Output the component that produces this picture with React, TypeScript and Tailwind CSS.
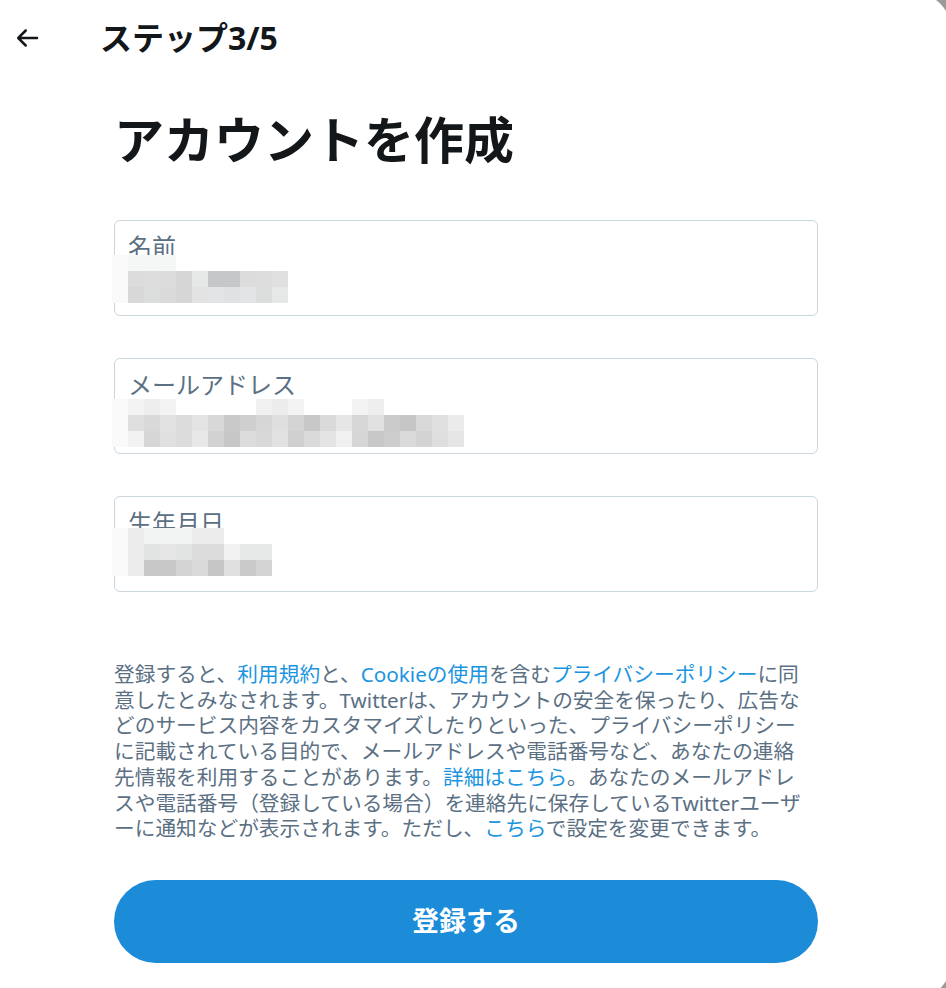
import React from 'react';

const FONT = "font-['Noto_Sans','Noto_Sans_CJK_JP',sans-serif]";

// pixelated (blurred) field values, 16px blocks
const nameBlocks = [
  ['bg-[#fafafa]', 'bg-[#f5f6f6]', 'bg-[#f5f6f6]', 'bg-[#f5f6f6]'],
  ['bg-[#fafafa]', 'bg-[#dcdcdc]', 'bg-[#dddddd]', 'bg-[#dcdcdc]', 'bg-[#d6d6d6]', 'bg-[#e6e7e7]', 'bg-[#c6c7c8]', 'bg-[#c6c7c8]', 'bg-[#dcdcdc]', 'bg-[#dddddd]', 'bg-[#e0e0e0]'],
  ['bg-[#fafafa]', 'bg-[#d8d8d8]', 'bg-[#dcdddd]', 'bg-[#dadada]', 'bg-[#d6d6d6]', 'bg-[#e3e3e3]', 'bg-[#e3e4e5]', 'bg-[#e0e1e2]', 'bg-[#e3e4e5]', 'bg-[#dcdddd]', 'bg-[#e6e7e7]'],
];

const emailBlocks = [
  ['bg-[#fafafa]', 'bg-[#f3f3f4]', 'bg-[#eeeeef]', 'bg-[#f3f3f4]', 'bg-white', 'bg-white', 'bg-white', 'bg-white', 'bg-white', 'bg-[#f0f0f1]', 'bg-[#ececed]', 'bg-[#f3f3f4]', 'bg-white', 'bg-white', 'bg-white', 'bg-[#f3f3f4]', 'bg-[#eeeeef]'],
  ['bg-[#fafafa]', 'bg-[#dedede]', 'bg-[#d9d9da]', 'bg-[#e2e2e3]', 'bg-[#dcdcdd]', 'bg-[#e4e4e5]', 'bg-[#d8d8d9]', 'bg-[#c9c9ca]', 'bg-[#cfcfd0]', 'bg-[#d6d6d7]', 'bg-[#dfdfe0]', 'bg-[#d4d4d5]', 'bg-[#c8c8c9]', 'bg-[#dadadb]', 'bg-[#e6e6e7]', 'bg-[#d7d7d8]', 'bg-[#e1e1e2]', 'bg-[#cbcbcc]', 'bg-[#c6c6c7]', 'bg-[#d9d9da]', 'bg-[#e0e0e1]', 'bg-[#ebebec]'],
  ['bg-[#fafafa]', 'bg-[#f2f2f2]', 'bg-[#d6d6d7]', 'bg-[#e0e0e1]', 'bg-[#dcdcdd]', 'bg-[#e8e8e9]', 'bg-[#d2d2d3]', 'bg-[#c7c7c8]', 'bg-[#dcdcdd]', 'bg-[#d8d8d9]', 'bg-[#e2e2e3]', 'bg-[#d0d0d1]', 'bg-[#dadadb]', 'bg-[#e4e4e5]', 'bg-[#f0f0f1]', 'bg-[#d6d6d7]', 'bg-[#c8c8c9]', 'bg-[#cdcdce]', 'bg-[#dadadb]', 'bg-[#d3d3d4]', 'bg-[#dedede]', 'bg-[#e6e6e7]'],
];

const birthBlocks = [
  ['bg-[#f9f9f9]', 'bg-[#ececed]', 'bg-[#f2f3f3]', 'bg-[#f2f3f3]', 'bg-[#f2f3f3]', 'bg-[#ececed]', 'bg-[#ececed]'],
  ['bg-[#fafafa]', 'bg-[#ececec]', 'bg-[#e2e3e3]', 'bg-[#e6e6e6]', 'bg-[#e2e3e3]', 'bg-[#dcdcdd]', 'bg-[#dcdcdd]', 'bg-[#f2f2f2]', 'bg-[#e6e7e7]', 'bg-[#e6e7e7]'],
  ['bg-[#fafafa]', 'bg-[#ececec]', 'bg-[#c8c8c9]', 'bg-[#c8c8c9]', 'bg-[#d4d4d4]', 'bg-[#dadadb]', 'bg-[#c6c6c7]', 'bg-[#e0e0e0]', 'bg-[#cacaca]', 'bg-[#d4d4d4]'],
];

const Mosaic: React.FC<{ rows: string[][]; offset: string }> = ({ rows, offset }) => (
  <div className={`relative -ml-[3px] flex flex-col ${offset}`}>
    {rows.map((row, i) => (
      <div key={i} className="flex">
        {row.map((c, j) => (
          <div key={j} className={`w-4 h-4 ${c}`} />
        ))}
      </div>
    ))}
  </div>
);

const Field: React.FC<{ label: string; rows: string[][]; offset: string }> = ({ label, rows, offset }) => (
  <div className="h-[96px] border border-[#ccd6dd] rounded-md bg-white">
    <div className="pt-[12px] pl-[13px] text-[24px] leading-[28px] text-[#5b7083]">{label}</div>
    <Mosaic rows={rows} offset={offset} />
  </div>
);

const A: React.FC<{ children: React.ReactNode }> = ({ children }) => (
  <span className="text-[#1b95e0]">{children}</span>
);

export default function App() {
  return (
    <div className={`w-[946px] h-[988px] overflow-hidden bg-[#9a9a9a] ${FONT}`}>
      <div className="-mt-[8px] -ml-[40px] w-[992px] h-[1008px] rounded-[40px] bg-white">
        <div className="pt-[8px] pl-[40px]">
          {/* Header */}
          <div className="h-[76px] flex items-center">
            <svg viewBox="0 0 24 24" className="ml-[12px] w-[30px] h-[30px] text-[#14171a]" fill="currentColor">
              <path d="M20 11H7.414l4.293-4.293c.39-.39.39-1.023 0-1.414s-1.023-.39-1.414 0l-6 6c-.39.39-.39 1.023 0 1.414l6 6c.195.195.45.293.707.293s.512-.098.707-.293c.39-.39.39-1.023 0-1.414L7.414 13H20c.553 0 1-.447 1-1s-.447-1-1-1z" />
            </svg>
            <div className="ml-[58px] text-[32px] font-bold text-[#14171a] leading-none">ステップ3/5</div>
          </div>

          <div className="ml-[114px] w-[704px]">
            <h1 className="mt-[34px] text-[50px] leading-[60px] font-bold text-[#14171a]">アカウントを作成</h1>

            <div className="mt-[50px] flex flex-col gap-[42px]">
              <Field label="名前" rows={nameBlocks} offset="-mt-[6px]" />
              <Field label="メールアドレス" rows={emailBlocks} offset="mt-0" />
              <Field label="生年月日" rows={birthBlocks} offset="-mt-[9px]" />
            </div>

            <div className="mt-[70px] text-[20.7px] leading-[25.7px] text-[#5b7083] whitespace-nowrap">
              <div>登録すると、<A>利用規約</A>と、<A>Cookieの使用</A>を含む<A>プライバシーポリシー</A>に同</div>
              <div>意したとみなされます。Twitterは、アカウントの安全を保ったり、広告な</div>
              <div>どのサービス内容をカスタマイズしたりといった、プライバシーポリシー</div>
              <div>に記載されている目的で、メールアドレスや電話番号など、あなたの連絡</div>
              <div>先情報を利用することがあります。<A>詳細はこちら</A>。あなたのメールアドレ</div>
              <div>スや電話番号（登録している場合）を連絡先に保存しているTwitterユーザ</div>
              <div>ーに通知などが表示されます。ただし、<A>こちら</A>で設定を変更できます。</div>
            </div>

            <button className="mt-[38px] w-full h-[83px] rounded-full bg-[#1c8cd8] text-white text-[27px] font-bold flex items-center justify-center">
              登録する
            </button>
          </div>
        </div>
      </div>
    </div>
  );
}
